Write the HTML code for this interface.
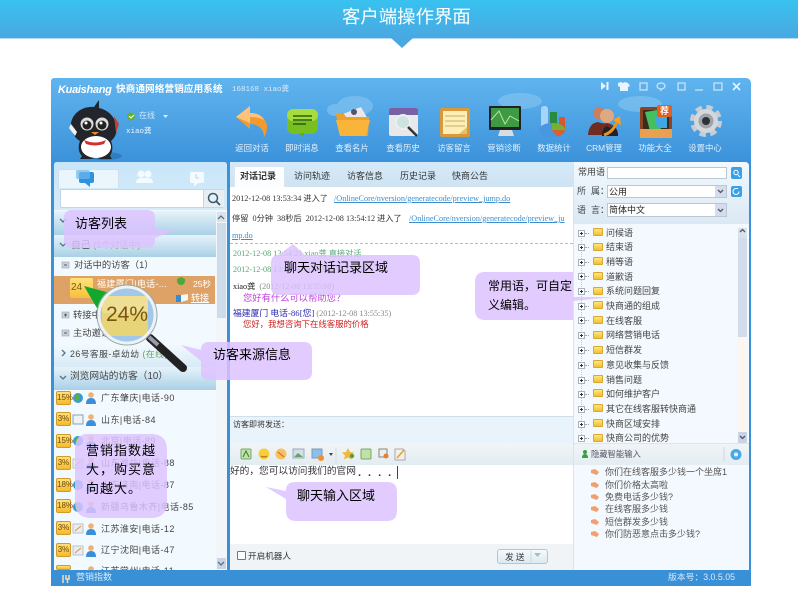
<!DOCTYPE html>
<html lang="zh"><head><meta charset="utf-8"><title>客户端操作界面</title>
<style>
html,body{margin:0;padding:0;background:#fff}
#p{position:relative;width:798px;height:598px;overflow:hidden;background:#fff;font-family:"Liberation Sans","Noto Sans CJK SC",sans-serif}
.a{position:absolute}
.t{position:absolute;white-space:nowrap;line-height:12px;font-size:9px;color:#444}
.l{color:#e2f1ff;font-size:8.400px;width:50px;text-align:center;top:142px}
.s{font-family:"Liberation Serif","Noto Sans CJK SC",serif;font-size:8.200px}
.h{height:22px;left:54px;width:162px;background:linear-gradient(#e6f3fa,#a9d0e6)}
.b{position:absolute;left:56px;width:15px;height:14px;background:linear-gradient(#ffe27a,#f7b92c);border:1px solid #d39a2a;box-sizing:border-box;border-radius:2px;font-size:8px;line-height:12px;text-align:center;color:#6a4a10}
.f{position:absolute;left:593px;width:10px;height:8px;background:linear-gradient(#ffe680,#f3bf30);border:1px solid #d9a830;box-sizing:border-box;border-radius:1px}
.x{position:absolute;left:578px;width:7px;height:7px;border:1px solid #a8b0b8;box-sizing:border-box;background:linear-gradient(90deg,transparent 2px,#333 2px,#333 3px,transparent 3px) center/100% 3px no-repeat,linear-gradient(#333,#333) center/3px 1px no-repeat,#fff}
.x::after{content:"";position:absolute;left:6px;top:2px;width:4px;border-top:1px dotted #9aa4ac}
.n{letter-spacing:.45px}
.i{position:absolute;left:0;top:0}
.c{position:absolute;z-index:6;white-space:nowrap;font-size:13px;line-height:18px;color:#000}
</style></head><body><div id="p">
<!-- banner -->
<div class="a" style="left:0;top:0;width:798px;height:38px;background:linear-gradient(#38c2ef,#49a8e2);border-bottom:1px solid #b5dcf3"></div>
<svg class="i" width="798" height="60" style="top:0"><path d="M391 38h22l-11 10z" fill="#49a8e2"/></svg>
<div class="t" style="left:342px;top:6px;font-size:18.400px;line-height:22px;color:#fff">客户端操作界面</div>
<!-- window -->
<div class="a" style="left:51px;top:78px;width:700px;height:508px;background:linear-gradient(#60b4ee 0,#3c92da 84px,#3a90d6 100%);border-radius:3px 5px 0 0"></div>
<svg class="i" width="798" height="170" style="top:0">
<g fill="#8cc8f2" opacity=".55"><ellipse cx="355" cy="106" rx="18" ry="10"/><ellipse cx="335" cy="110" rx="8" ry="6"/><ellipse cx="520" cy="101" rx="22" ry="8"/><ellipse cx="640" cy="104" rx="22" ry="8"/></g>
<!-- penguin -->
<ellipse cx="104" cy="156" rx="18" ry="4" fill="#2c6ca8" opacity=".6"/>
<path d="M99 100l-5 7c-14-1-24 9-23 20 1 7 5 12 9 14-2 5-2 11 2 15l-2 3h12l4-2 4 2h12l-2-3c3-5 3-10 1-15 5-4 7-11 5-17-2-8-8-14-17-16 0-3 0-6 0-8z" fill="#22252c"/>
<ellipse cx="96" cy="147" rx="15" ry="11" fill="#fff"/><circle cx="87" cy="124" r="6.500" fill="#ddd"/><circle cx="102" cy="124" r="6.500" fill="#ddd"/><circle cx="87" cy="125" r="4.500" fill="#222"/><circle cx="102" cy="125" r="4.500" fill="#222"/><circle cx="86" cy="123" r="1.500" fill="#fff"/><circle cx="101" cy="123" r="1.500" fill="#fff"/><path d="M91 132l4 3 4-3z" fill="#f08a20"/><path d="M84 140q11 5 22 0l-2 4q-9 3-18 0z" fill="#d03030"/><path d="M114 116l5 8-3 9z" fill="#c24030"/><path d="M71 124l6 8-2 4-6-8z" fill="#f2f2f2"/>
<!-- status -->
<circle cx="131" cy="116.500" r="4" fill="#62b030"/><path d="M129 116l2 2 3-3" stroke="#fff" fill="none"/><path d="M163 115h5l-2.500 3z" fill="#d8ecfb"/>
<!-- return arrow -->
<path d="M236 117l14-11v7c12 0 17 8 17 14 0 4-1 7-3 10 0-7-5-13-14-13v5z" fill="#f39a2e"/><path d="M236 117l14-11v7c8 0 12 3 14 7-4-2-8-3-14-3v6z" fill="#ffc27a"/>
<!-- message -->
<rect x="287" y="109" width="31" height="25" rx="7" fill="#78c020"/><rect x="287" y="109" width="31" height="12" rx="6" fill="#a6dc3c"/><path d="M299 133l3 4 3-4z" fill="#66ac1c"/><path d="M293 116h19M293 120h19M293 124h13" stroke="#2a5c10" stroke-width="1.600"/>
<!-- card folder -->
<path d="M343 114l18-7 7 12-20 6z" fill="#e8e8ec"/><circle cx="354" cy="112" r="3" fill="#556"/><path d="M336 114h8l2 3h23l-1 19h-28z" fill="#eea028"/><path d="M336 120h34l-4 16h-26z" fill="#f9b53a"/>
<!-- history -->
<rect x="389" y="108" width="29" height="28" rx="2" fill="#e8e8ea"/><path d="M389 110a2 2 0 0 1 2-2h25a2 2 0 0 1 2 2v5h-29z" fill="#7a5fa6"/><circle cx="403" cy="122" r="7" fill="#cfe2e2" stroke="#e8f0f0" stroke-width="2"/><path d="M408 127l9 9" stroke="#333" stroke-width="2.500"/>
<!-- message board -->
<rect x="440" y="108" width="30" height="29" rx="2" fill="#d9983a"/><rect x="443" y="111" width="24" height="23" fill="#fdeeb8"/><path d="M445 116h20M445 121h20M445 126h20" stroke="#c9ae6a"/><path d="M459 134l8-7v7z" fill="#e9c260"/>
<!-- monitor -->
<rect x="489" y="106" width="32" height="24" rx="1" fill="#222"/><rect x="491" y="108" width="28" height="19" fill="#3f9a44"/><path d="M491 120l8-9 6 13 5-8 9 5" stroke="#b8e4a0" fill="none"/><path d="M500 130h12l2 6h-16z" fill="#d8dde2"/>
<!-- chart -->
<rect x="541" y="106" width="7" height="26" rx="3" fill="#a8d4f8"/><rect x="550" y="112" width="7" height="14" fill="#2a8a40"/><rect x="559" y="117" width="6" height="12" fill="#d85830"/><ellipse cx="552" cy="130" rx="13" ry="7" fill="#4a96e0"/><path d="M552 130l0-7a13 7 0 0 1 13 7z" fill="#78b030"/><path d="M552 130h13a13 7 0 0 1-8 6.500z" fill="#d86030"/>
<!-- crm -->
<circle cx="599" cy="113" r="6" fill="#c98060"/><circle cx="607" cy="116" r="7" fill="#e0a880"/><path d="M588 135q1-12 10-13 4 2 9 1 10 2 11 12z" fill="#702c20"/><path d="M602 136q0-8 5-10l3 2 3-2q5 2 5 10z" fill="#222"/><path d="M604 135q10-3 14-16" stroke="#f09020" stroke-width="3" fill="none"/><path d="M613 120l7-4 1 9z" fill="#f8a020"/>
<!-- function box -->
<rect x="640" y="107" width="32" height="31" rx="2" fill="#8a4420"/><rect x="643" y="110" width="26" height="20" fill="#3a2a20"/><path d="M645 112l12-2 4 20-11 1z" fill="#44c060"/><path d="M655 116h12v12h-10z" fill="#40a8e0"/><rect x="640" y="129" width="32" height="9" fill="#e9a050"/><rect x="657" y="105" width="15" height="12" rx="2" fill="#e06020"/>
<text x="660" y="114" font-size="9" font-weight="bold" fill="#fff">荐</text>
<!-- gear -->
<circle cx="706" cy="121" r="13" fill="none" stroke="#c9cdd2" stroke-width="6" stroke-dasharray="6 4.200"/><circle cx="706" cy="121" r="12" fill="#d4d7dc"/><circle cx="706" cy="121" r="7.500" fill="#a0a4aa"/><circle cx="706" cy="121" r="4" fill="#2d3238"/>
<!-- window buttons -->
<g fill="#e8f4ff"><path d="M601 82l5 4-5 4z"/><rect x="606.500" y="82" width="2" height="8"/><path d="M618 83l3-1 2 1 2-1 3 1 2 3-2 1v4h-8v-4l-2-1z"/></g>
<g fill="none" stroke="#cfe6fa" stroke-width="1.200"><rect x="640" y="83" width="7" height="7"/><ellipse cx="661" cy="86" rx="4" ry="3"/><path d="M661 89v2"/><rect x="678" y="83" width="7" height="7"/><path d="M695 90h8"/><rect x="714" y="83" width="8" height="7"/></g>
<path d="M733 83l7 7M740 83l-7 7" stroke="#e8f4ff" stroke-width="1.600"/>
</svg>
<div class="t" style="left:58px;top:83px;font-size:11px;line-height:14px;font-weight:bold;font-style:italic;color:#fff;letter-spacing:-.3px">Kuaishang</div>
<div class="t" style="left:116px;top:84px;font-size:9.700px;font-weight:bold;color:#fff">快商通网络营销应用系统</div>
<div class="t" style="left:232px;top:84px;font-size:7.500px;color:#dbeaf7;font-family:'Liberation Mono','Noto Sans CJK SC',monospace">168168 xiao龚</div>
<div class="t" style="left:139px;top:110px;font-size:8px;color:#cfe6fa">在线</div>
<div class="t" style="left:126px;top:126px;font-size:7.500px;color:#eef7ff;font-family:'Liberation Mono','Noto Sans CJK SC',monospace">xiao龚</div>
<div class="t l" style="left:227px">返回对话</div><div class="t l" style="left:277px">即时消息</div><div class="t l" style="left:327px">查看名片</div><div class="t l" style="left:378px">查看历史</div><div class="t l" style="left:429px">访客留言</div><div class="t l" style="left:479px">营销诊断</div><div class="t l" style="left:529px">数据统计</div><div class="t l" style="left:579px">CRM管理</div><div class="t l" style="left:630px">功能大全</div><div class="t l" style="left:680px">设置中心</div>

<!-- left panel -->
<div class="a" style="left:54px;top:162px;width:173px;height:408px;background:#f3faff;border-radius:3px 3px 0 0"></div>
<div class="a" style="left:54px;top:162px;width:173px;height:48px;background:linear-gradient(#c8e6fa,#d6ebf8);border-radius:3px 3px 0 0"></div>
<div class="a" style="left:58px;top:169px;width:59px;height:18px;background:#eaf5fc;border:1px solid #cfe0ec;border-bottom:0;border-radius:2px 2px 0 0"></div>
<svg class="i" width="798" height="200">
<rect x="79" y="172" width="15" height="11" rx="2" fill="#2f93dc"/><path d="M85 183l5 4v-4z" fill="#2f93dc"/><rect x="76" y="170" width="14" height="9" rx="2" fill="#6cb8ec" opacity=".7"/>
<g fill="#f4fbff"><circle cx="141" cy="174" r="3.500"/><circle cx="148" cy="174" r="3.500"/><path d="M136 183q0-5 5-5h7q5 0 5 5z"/><rect x="190" y="172" width="14" height="11" rx="2"/><path d="M194 183v4l4-4z"/></g><path d="M196 174v4h3" stroke="#bcd6e6" fill="none"/>
</svg>
<div class="a" style="left:60px;top:189px;width:164px;height:19px;background:#fff;border:1px solid #c2d6e4;box-sizing:border-box;border-radius:2px"></div>
<div class="a" style="left:203px;top:190px;width:20px;height:17px;background:#e8eff4;border-left:1px solid #c2d6e4"></div>
<div class="a h" style="top:211px;height:24px"></div>
<div class="a h" style="top:235px;height:22px"></div>
<div class="a" style="left:54px;top:276px;width:161px;height:28px;background:#dfa266"></div>
<div class="a h" style="top:343px;height:24px;background:linear-gradient(#f3fbff,#d8eaf5)"></div>
<div class="a h" style="top:367px;height:23px"></div>
<div class="a" style="left:216px;top:211px;width:11px;height:359px;background:#f2f6f9"></div>
<div class="a" style="left:217px;top:223px;width:9px;height:95px;background:#cddcea"></div>
<div class="a" style="left:217px;top:212px;width:9px;height:10px;background:#d8e3ee"></div>
<div class="a" style="left:217px;top:558px;width:9px;height:11px;background:#c9d3e6"></div>
<svg class="i" width="798" height="598">
<circle cx="213" cy="198" r="4.500" fill="none" stroke="#39586e" stroke-width="1.500"/><path d="M216 201l4 4" stroke="#39586e" stroke-width="1.800"/>
<g fill="none" stroke="#5a7486" stroke-width="1.300"><path d="M60 219l3 3 3-3M60 243l3 3 3-3M60 376l3 3 3-3M62 350l3 3-3 3"/><path d="M218 219l3-3 3 3M218 562l3 3 3-3"/></g>
<g fill="#c8d2da" stroke="#9aa6b0" stroke-width=".6"><rect x="62" y="262" width="7" height="6"/><rect x="62" y="312" width="7" height="6"/><rect x="62" y="330" width="7" height="6"/></g>
<path d="M64 265h3M64 333h3M64 315h3M65.500 313.500v3" stroke="#556"/>
<!-- orange row -->
<path d="M181 277l4 2v2a4 4 0 1 1-8 0v-2z" fill="#4ca838"/><rect x="176" y="295" width="5" height="7" fill="#3a8ad0"/><path d="M181 295l7-1v6l-7 2z" fill="#f6f6f6"/>
</svg>
<div class="t" style="left:71px;top:239px;font-size:9.800px;color:#444">自己 <span style="color:#7ea488;font-size:9px">(1个对话中)</span></div>
<div class="t" style="left:74px;top:259px;font-size:9.300px">对话中的访客（1）</div>
<div class="a" style="left:70px;top:278px;width:23px;height:20px;background:linear-gradient(#ffe27a,#f7bf3a);border-radius:2px;font-size:10px;line-height:20px;color:#7a5a10;padding-left:1px;box-sizing:border-box">24</div>
<div class="t" style="left:97px;top:278px;color:#fff;font-size:9px;letter-spacing:.3px">福建厦门|电话-...</div>
<div class="t" style="left:193px;top:278px;color:#fff;font-size:8.500px">25秒</div>
<div class="t" style="left:191px;top:292px;color:#fff;font-size:9px;text-decoration:underline">转接</div>
<div class="t" style="left:73px;top:309px;font-size:9.300px">转接中的访客</div>
<div class="t" style="left:73px;top:327px;font-size:9.300px">主动邀请的访客</div>
<div class="t n" style="left:70px;top:348px;font-size:8.800px">26号客服-卓幼幼 <span style="color:#6aa060">(在线)</span></div>
<div class="t" style="left:70px;top:371px;font-size:9.700px">浏览网站的访客（10）</div>
<div class="b" style="top:391px">15%</div><div class="b" style="top:412px">3%</div><div class="b" style="top:434px">15%</div><div class="b" style="top:456px">3%</div><div class="b" style="top:478px">18%</div><div class="b" style="top:499px">18%</div><div class="b" style="top:521px">3%</div><div class="b" style="top:543px">3%</div><div class="b" style="top:565px;height:5px"></div>
<svg class="i" width="798" height="570">
<g id="g"><circle cx="78" cy="398" r="5" fill="#3a9ad8"/><path d="M75 394l5 1-1 5-4 1z" fill="#5ab038"/><circle cx="78" cy="441" r="5" fill="#3a9ad8"/><path d="M75 437l5 1-1 5-4 1z" fill="#5ab038"/><circle cx="78" cy="485" r="5" fill="#3a9ad8"/><circle cx="78" cy="507" r="5" fill="#3a9ad8"/><path d="M75 503l5 1-1 5-4 1z" fill="#5ab038"/><rect x="73" y="415" width="10" height="9" fill="#eef3f8" stroke="#8aa0b8"/><rect x="73" y="459" width="10" height="9" fill="#e9edf0" stroke="#b8c4cc"/><path d="M75 466l6-5" stroke="#e09050"/><rect x="73" y="524" width="10" height="9" fill="#e9edf0" stroke="#b8c4cc"/><path d="M75 531l6-5" stroke="#e09050"/><rect x="73" y="546" width="10" height="9" fill="#e9edf0" stroke="#b8c4cc"/><path d="M75 553l6-5" stroke="#e09050"/></g>
<g fill="#f2b070"><circle cx="91" cy="395" r="2.800"/><circle cx="91" cy="417" r="2.800"/><circle cx="91" cy="438" r="2.800"/><circle cx="91" cy="460" r="2.800"/><circle cx="91" cy="482" r="2.800"/><circle cx="91" cy="504" r="2.800"/><circle cx="91" cy="526" r="2.800"/><circle cx="91" cy="548" r="2.800"/><circle cx="91" cy="569" r="2.800"/></g>
<g fill="#3a90d8"><path d="M86 404q0-6 5-6t5 6z"/><path d="M86 426q0-6 5-6t5 6z"/><path d="M86 447q0-6 5-6t5 6z"/><path d="M86 469q0-6 5-6t5 6z"/><path d="M86 491q0-6 5-6t5 6z"/><path d="M86 513q0-6 5-6t5 6z"/><path d="M86 535q0-6 5-6t5 6z"/><path d="M86 557q0-6 5-6t5 6z"/></g>
</svg>
<div class="t n" style="left:101px;top:392px">广东肇庆|电话-90</div>
<div class="t n" style="left:101px;top:414px">山东|电话-84</div>
<div class="t n" style="left:101px;top:435px">北京|电话-89</div>
<div class="t n" style="left:101px;top:457px">山东潍坊|电话-88</div>
<div class="t n" style="left:101px;top:479px">山东济南|电话-87</div>
<div class="t n" style="left:101px;top:501px">新疆乌鲁木齐|电话-85</div>
<div class="t n" style="left:101px;top:523px">江苏淮安|电话-12</div>
<div class="t n" style="left:101px;top:544px">辽宁沈阳|电话-47</div>
<div class="a" style="left:54px;top:563px;width:160px;height:7px;overflow:hidden"><div class="t n" style="left:47px;top:2px">江苏常州|电话-11</div></div>
<!-- middle panel -->
<div class="a" style="left:230px;top:162px;width:343px;height:408px;background:#fff;border-radius:3px 0 0 0"></div>
<div class="a" style="left:230px;top:162px;width:343px;height:25px;background:linear-gradient(#d4eafa,#cfe3f2)"></div>
<div class="a" style="left:234px;top:166px;width:51px;height:21px;background:#fbfdff;border:1px solid #dbe6ee;border-bottom:0;box-sizing:border-box;border-radius:2px 2px 0 0"></div>
<div class="t" style="left:240px;top:170px;font-weight:bold;color:#333">对话记录</div>
<div class="t" style="left:294px;top:170px;color:#333">访问轨迹</div>
<div class="t" style="left:347px;top:170px;color:#333">访客信息</div>
<div class="t" style="left:400px;top:170px;color:#333">历史记录</div>
<div class="t" style="left:452px;top:170px;color:#333">快商公告</div>
<div class="t s" style="left:232px;top:193px;color:#333">2012-12-08 13:53:34 进入了</div>
<div class="t s" style="left:334px;top:193px;color:#3a8ed0;text-decoration:underline">/OnlineCore/nversion/generatecode/preview_jump.do</div>
<div class="t s" style="left:232px;top:213px;color:#333">停留&nbsp; 0分钟&nbsp; 38秒后&nbsp; 2012-12-08 13:54:12 进入了</div>
<div class="t s" style="left:409px;top:213px;color:#3a8ed0;text-decoration:underline">/OnlineCore/nversion/generatecode/preview_ju</div>
<div class="t s" style="left:232px;top:230px;color:#3a8ed0;text-decoration:underline">mp.do</div>
<div class="a" style="left:230px;top:243px;width:343px;border-top:1px dashed #b8bcc0"></div>
<div class="t s" style="left:233px;top:248px;color:#5aa678">2012-12-08 13:54:21 xiao龚 直接对话</div>
<div class="t s" style="left:233px;top:264px;color:#5aa678">2012-12-08 13:54:30 xiao龚接受了邀请</div>
<div class="t s" style="left:233px;top:281px;color:#888"><span style="color:#222">xiao龚</span>&nbsp; (2012-12-08 13:55:00)</div>
<div class="t" style="left:243px;top:292px;font-size:9.300px;color:#c040e0">您好有什么可以帮助您？</div>
<div class="t s" style="left:233px;top:307px;color:#888"><span style="color:#2a2ab0;font-size:8.800px">福建厦门 电话-86[您]</span> (2012-12-08 13:55:35)</div>
<div class="t" style="left:243px;top:318px;font-size:8.400px;color:#d02020">您好，我想咨询下在线客服的价格</div>
<div class="a" style="left:230px;top:416px;width:343px;height:27px;background:#e9f3fc;border-top:1px solid #cfe0ec;box-sizing:border-box"></div>
<div class="t" style="left:233px;top:419px;font-size:8px;color:#333">访客即将发送：</div>
<div class="a" style="left:230px;top:443px;width:343px;height:22px;background:linear-gradient(#f2f5f6,#e2ecf1)"></div>
<svg class="i" width="798" height="598">
<rect x="241" y="449" width="10" height="10" rx="1" fill="#bfe2a8" stroke="#78a868"/><path d="M243 457l3-6 3 6" stroke="#3a7a30" fill="none"/>
<circle cx="264" cy="454" r="5.500" fill="#f7cf3a"/><path d="M261 456q3 2 6 0" stroke="#a06010" fill="none"/>
<circle cx="281" cy="454" r="5.500" fill="#f7c060"/><path d="M278 452l6 5" stroke="#d86020"/>
<rect x="293" y="449" width="11" height="9" fill="#cfe0e8" stroke="#9ab"/><path d="M294 457l4-4 5 4" fill="#6aa060"/>
<rect x="312" y="449" width="10" height="9" fill="#8ac0ea" stroke="#7a9ab8"/><circle cx="321" cy="458" r="3" fill="#f09030"/><path d="M329 453h4l-2 3z" fill="#444"/>
<path d="M336 447v16" stroke="#d0dce4"/>
<path d="M348 448l2 4 4 .500-3 3 1 4-4-2-4 2 1-4-3-3 4-.500z" fill="#f0b840"/><circle cx="352" cy="456" r="2.200" fill="#58a030"/>
<rect x="361" y="449" width="10" height="10" rx="1" fill="#bfe2a8" stroke="#78a868"/>
<rect x="379" y="449" width="8" height="8" fill="#eee" stroke="#887"/><circle cx="386" cy="456" r="2.500" fill="#e08030"/>
<path d="M395 449h8l2 2v9h-10z" fill="#f4f0e6" stroke="#aaa"/><path d="M397 458l7-8" stroke="#e0a030" stroke-width="1.500"/>
</svg>
<div class="t" style="left:230px;top:466px;font-size:9.700px;color:#333">好的，您可以访问我们的官网</div>
<div class="t" style="left:358px;top:467px;font-size:11px;font-weight:bold;color:#333;letter-spacing:7px">....</div>
<div class="a" style="left:397px;top:466px;width:1px;height:13px;background:#444"></div>
<div class="a" style="left:230px;top:544px;width:343px;height:26px;background:#f0f4f6"></div>
<div class="a" style="left:237px;top:551px;width:9px;height:9px;border:1px solid #777;box-sizing:border-box;background:#fff;border-radius:1px"></div>
<div class="t" style="left:248px;top:550px;font-size:8.600px;color:#333">开启机器人</div>
<div class="a" style="left:497px;top:549px;width:51px;height:15px;background:linear-gradient(#f6fafd,#dce9f3);border:1px solid #a8c8dc;box-sizing:border-box;border-radius:3px"></div>
<div class="t" style="left:505px;top:551px;font-size:8.800px;color:#333;letter-spacing:2px">发送</div>
<svg class="i" width="798" height="598"><path d="M534 553h7l-3.500 4z" fill="#a8bccc"/><path d="M531 551v11" stroke="#c8d8e4"/></svg>
<!-- right panel -->
<div class="a" style="left:573px;top:162px;width:176px;height:408px;background:#f3f9fe;border-radius:0 4px 0 0;border-left:1px solid #d6e4ee;box-sizing:border-box"></div>
<div class="a" style="left:574px;top:162px;width:175px;height:62px;background:linear-gradient(#f2f9fe,#dbe9f4);border-radius:0 4px 0 0"></div>
<div class="t" style="left:578px;top:166px;color:#444">常用语</div>
<div class="t" style="left:577px;top:185px;color:#444">所&nbsp;&nbsp;属：</div>
<div class="t" style="left:577px;top:204px;color:#444">语&nbsp;&nbsp;言：</div>
<div class="a" style="left:607px;top:167px;width:120px;height:12px;background:#fff;border:1px solid #b8c8d4;box-sizing:border-box"></div>
<div class="a" style="left:607px;top:185px;width:120px;height:13px;background:#fff;border:1px solid #b8c8d4;box-sizing:border-box"></div>
<div class="a" style="left:607px;top:203px;width:120px;height:14px;background:#fff;border:1px solid #b8c8d4;box-sizing:border-box"></div>
<div class="t" style="left:609px;top:186px;color:#222">公用</div>
<div class="t" style="left:609px;top:204px;color:#222">简体中文</div>
<div class="a" style="left:715px;top:186px;width:11px;height:11px;background:#d4dcee"></div>
<div class="a" style="left:715px;top:204px;width:11px;height:12px;background:#d4dcee"></div>
<div class="a" style="left:731px;top:167px;width:11px;height:12px;background:#39a2e6;border-radius:2px"></div>
<div class="a" style="left:731px;top:186px;width:11px;height:11px;background:#39a2e6;border-radius:2px"></div>
<svg class="i" width="798" height="598">
<path d="M718 190l2.500 2.500 2.500-2.500M718 209l2.500 2.500 2.500-2.500" stroke="#556" stroke-width="1.300" fill="none"/>
<circle cx="736" cy="172.500" r="2.200" fill="none" stroke="#fff"/><path d="M738 175l2 2" stroke="#fff"/>
<path d="M739 191.500a3 3 0 1 1-3-3h2" stroke="#fff" fill="none"/>
</svg>
<div class="a" style="left:737px;top:227px;width:10px;height:216px;background:#fbf7f0"></div>
<div class="a" style="left:738px;top:238px;width:9px;height:99px;background:#d2dcea"></div>
<div class="a" style="left:738px;top:228px;width:9px;height:10px;background:#d8e3ee"></div>
<div class="a" style="left:738px;top:432px;width:9px;height:11px;background:#c9d3e6"></div>
<svg class="i" width="798" height="598"><path d="M740 232l2.500-2.500 2.500 2.500M740 436l2.500 2.500 2.500-2.500" stroke="#556" stroke-width="1.300" fill="none"/><path d="M581.500 230v210" stroke="#c0c8d0" stroke-dasharray="1 1"/></svg>
<div class="x" style="top:230px"></div><div class="x" style="top:244px"></div><div class="x" style="top:259px"></div><div class="x" style="top:273px"></div><div class="x" style="top:288px"></div><div class="x" style="top:303px"></div><div class="x" style="top:317px"></div><div class="x" style="top:332px"></div><div class="x" style="top:347px"></div><div class="x" style="top:362px"></div><div class="x" style="top:377px"></div><div class="x" style="top:391px"></div><div class="x" style="top:406px"></div><div class="x" style="top:421px"></div><div class="x" style="top:435px"></div>
<div class="f" style="top:228px"></div><div class="f" style="top:243px"></div><div class="f" style="top:257px"></div><div class="f" style="top:272px"></div><div class="f" style="top:287px"></div><div class="f" style="top:301px"></div><div class="f" style="top:316px"></div><div class="f" style="top:331px"></div><div class="f" style="top:346px"></div><div class="f" style="top:360px"></div><div class="f" style="top:375px"></div><div class="f" style="top:389px"></div><div class="f" style="top:404px"></div><div class="f" style="top:419px"></div><div class="f" style="top:434px"></div>
<div class="t" style="left:606px;top:227px">问候语</div><div class="t" style="left:606px;top:241px">结束语</div><div class="t" style="left:606px;top:256px">稍等语</div><div class="t" style="left:606px;top:271px">道歉语</div><div class="t" style="left:606px;top:285px">系统问题回复</div><div class="t" style="left:606px;top:300px">快商通的组成</div><div class="t" style="left:606px;top:315px">在线客服</div><div class="t" style="left:606px;top:329px">网络营销电话</div><div class="t" style="left:606px;top:344px">短信群发</div><div class="t" style="left:606px;top:359px">意见收集与反馈</div><div class="t" style="left:606px;top:374px">销售问题</div><div class="t" style="left:606px;top:388px">如何维护客户</div><div class="t" style="left:606px;top:403px">其它在线客服转快商通</div><div class="t" style="left:606px;top:418px">快商区域安排</div><div class="a" style="left:600px;top:430px;width:130px;height:13px;overflow:hidden"><div class="t" style="left:6px;top:2px">快商公司的优势</div></div>
<div class="a" style="left:574px;top:443px;width:175px;height:22px;background:linear-gradient(#f0f4f6,#e4edf2);border-top:1px solid #dce6ec;box-sizing:border-box"></div>
<svg class="i" width="798" height="598">
<circle cx="585" cy="452" r="2" fill="#38a040"/><path d="M582 458q0-4 3-4t3 4z" fill="#38a040"/>
<path d="M724 447v14" stroke="#d0d8de"/><circle cx="736" cy="454.500" r="5.500" fill="#4aa8e8"/><circle cx="736" cy="454.500" r="2" fill="#e8f6ff"/>
<g fill="#f0a070"><path d="M591 470l4-1 4 3-2 3-6-2z"/><path d="M591 483l4-1 4 3-2 3-6-2z"/><path d="M591 495l4-1 4 3-2 3-6-2z"/><path d="M591 507l4-1 4 3-2 3-6-2z"/><path d="M591 520l4-1 4 3-2 3-6-2z"/><path d="M591 532l4-1 4 3-2 3-6-2z"/></g>
</svg>
<div class="t" style="left:591px;top:448px;font-size:8.300px;color:#556">隐藏智能输入</div>
<div class="t" style="left:605px;top:466px;color:#555">你们在线客服多少钱一个坐席1</div><div class="t" style="left:605px;top:478.500px;color:#555">你们价格太高啦</div><div class="t" style="left:605px;top:491px;color:#555">免费电话多少钱?</div><div class="t" style="left:605px;top:503px;color:#555">在线客服多少钱</div><div class="t" style="left:605px;top:516px;color:#555">短信群发多少钱</div><div class="t" style="left:605px;top:528px;color:#555">你们防恶意点击多少钱?</div>
<!-- status bar -->
<div class="t" style="left:76px;top:571px;font-size:9px;color:#d6ebfa">营销指数</div>
<svg class="i" width="798" height="598"><path d="M63 575v8M66 575v4h3v-4M67.500 579v4" stroke="#f2dcc0" stroke-width="1.500" fill="none"/></svg>
<div class="t" style="left:668px;top:571px;font-size:8.800px;color:#d6ebfa">版本号：3.0.5.05</div>
<!-- magnifier -->
<svg class="i" width="798" height="598" style="z-index:4">
<defs><clipPath id="lens"><circle cx="127" cy="315" r="27"/></clipPath></defs>
<path d="M84 286l26 7-9 22z" fill="#12a82e"/>
<path d="M150 338l33 30" stroke="#222" stroke-width="8" stroke-linecap="round"/><path d="M149 337l9 8" stroke="#99a" stroke-width="4"/>
<circle cx="127" cy="315" r="27" fill="#9fc8ea"/>
<g clip-path="url(#lens)"><rect x="102" y="296" width="46" height="40" rx="4" fill="#e8d478"/><rect x="102" y="296" width="46" height="17" rx="3" fill="#f4eab0" opacity=".5"/></g>
<circle cx="127" cy="315" r="28" fill="none" stroke="#eef2f4" stroke-width="3"/>
<circle cx="127" cy="315" r="30" fill="none" stroke="#9aa" stroke-width="1"/>
</svg>
<div class="t" style="left:106px;top:304px;z-index:5;font-size:21px;line-height:22px;color:#7a5410">24%</div>
<!-- callouts -->
<svg class="i" width="798" height="598" style="z-index:5">
<g fill="#dcc2ff" opacity=".84">
<path d="M72 210h75q8 0 8 8v12h20l-20 8v2q0 8-8 8h-75q-8 0-8-8v-22q0-8 8-8z"/>
<path d="M279 255l14-11 12 11h107q8 0 8 8v24q0 8-8 8h-133q-8 0-8-8v-24q0-8 8-8z"/>
<path d="M485 272h88v25h40l-40 4v19h-88q-10 0-10-10v-28q0-10 10-10z"/>
<path d="M209 342h95q8 0 8 8v22q0 8-8 8h-95q-8 0-8-8v-11l-20-16 20 5v0q0-8 8-8z"/>
<path d="M87 434h64q16 0 16 16v52q0 16-16 16h-60q-16 0-16-16v-52q0-16 12-16z"/>
<path d="M296 482h91q10 0 10 10v19q0 10-10 10h-91q-10 0-10-10v-12l-20-12 20 4v-1q0-8 10-8z"/>
</g></svg>
<div class="c" style="left:75px;top:215px">访客列表</div>
<div class="c" style="left:284px;top:259px">聊天对话记录区域</div>
<div class="c" style="left:488px;top:277px;line-height:19px;font-size:12px">常用语，可自定<br>义编辑。</div>
<div class="c" style="left:213px;top:346px">访客来源信息</div>
<div class="c" style="left:86px;top:441px;line-height:19px;white-space:normal;width:72px;letter-spacing:1px">营销指数越大，购买意向越大。</div>
<div class="c" style="left:297px;top:487px">聊天输入区域</div>
</div></body></html>
